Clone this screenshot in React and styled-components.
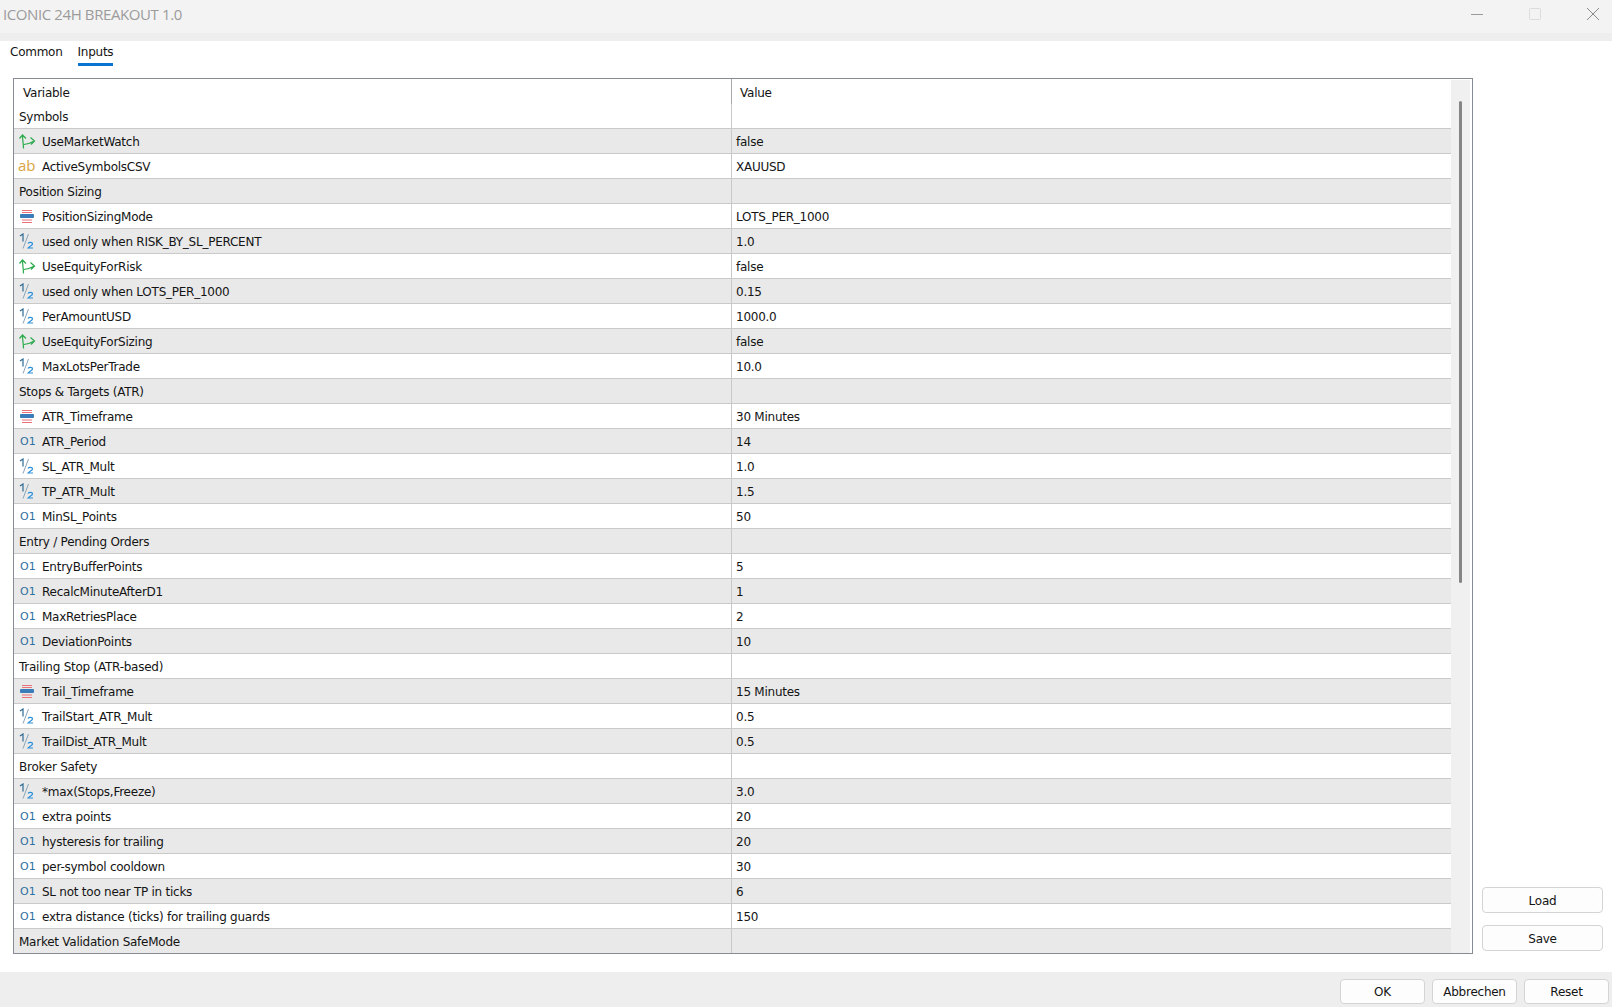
import React from "react";
import styled, { createGlobalStyle } from "styled-components";

const rows = [
  { group: "Symbols" },
  { type: "bool", name: "UseMarketWatch", value: "false" },
  { type: "str", name: "ActiveSymbolsCSV", value: "XAUUSD" },
  { group: "Position Sizing" },
  { type: "enum", name: "PositionSizingMode", value: "LOTS_PER_1000" },
  { type: "dbl", name: "used only when RISK_BY_SL_PERCENT", value: "1.0" },
  { type: "bool", name: "UseEquityForRisk", value: "false" },
  { type: "dbl", name: "used only when LOTS_PER_1000", value: "0.15" },
  { type: "dbl", name: "PerAmountUSD", value: "1000.0" },
  { type: "bool", name: "UseEquityForSizing", value: "false" },
  { type: "dbl", name: "MaxLotsPerTrade", value: "10.0" },
  { group: "Stops & Targets (ATR)" },
  { type: "enum", name: "ATR_Timeframe", value: "30 Minutes" },
  { type: "int", name: "ATR_Period", value: "14" },
  { type: "dbl", name: "SL_ATR_Mult", value: "1.0" },
  { type: "dbl", name: "TP_ATR_Mult", value: "1.5" },
  { type: "int", name: "MinSL_Points", value: "50" },
  { group: "Entry / Pending Orders" },
  { type: "int", name: "EntryBufferPoints", value: "5" },
  { type: "int", name: "RecalcMinuteAfterD1", value: "1" },
  { type: "int", name: "MaxRetriesPlace", value: "2" },
  { type: "int", name: "DeviationPoints", value: "10" },
  { group: "Trailing Stop (ATR-based)" },
  { type: "enum", name: "Trail_Timeframe", value: "15 Minutes" },
  { type: "dbl", name: "TrailStart_ATR_Mult", value: "0.5" },
  { type: "dbl", name: "TrailDist_ATR_Mult", value: "0.5" },
  { group: "Broker Safety" },
  { type: "dbl", name: "*max(Stops,Freeze)", value: "3.0" },
  { type: "int", name: "extra points", value: "20" },
  { type: "int", name: "hysteresis for trailing", value: "20" },
  { type: "int", name: "per-symbol cooldown", value: "30" },
  { type: "int", name: "SL not too near TP in ticks", value: "6" },
  { type: "int", name: "extra distance (ticks) for trailing guards", value: "150" },
  { group: "Market Validation SafeMode" },
];

function TypeIcon({ type }) {
  if (type === "bool") {
    return (
      <IconSvg viewBox="0 0 18 16">
        <path
          d="M1.500 5.500L4.500 2 8 5.500M4.500 2C4.500 7 5.500 11 5.500 15.500M6 11.500C9 11 13 10 16.500 8M12.500 4.500L16.500 8 13 11.500"
          fill="none"
          stroke="#2bab4c"
          strokeWidth="1.2"
        />
      </IconSvg>
    );
  }
  if (type === "enum") {
    return (
      <IconSvg viewBox="0 0 18 16">
        <path d="M4 2.500h10M4 4.500h10M4 12h10M4 14.500h10" stroke="#e8737a" strokeWidth="1" />
        <rect x="2" y="6" width="14" height="4" rx="1" fill="#3a7db8" />
      </IconSvg>
    );
  }
  if (type === "dbl") {
    return (
      <IconSvg viewBox="0 0 18 16">
        <path d="M2 3L5 1v7.500" fill="none" stroke="#2c6a96" strokeWidth="1.2" />
        <path d="M5 15.500L10.500 1" stroke="#8aa4b8" strokeWidth="1" />
        <path d="M10 10.500c1-1.500 4.500-1.500 4.500.5 0 1.500-3 2-4.500 4h5" fill="none" stroke="#2a8fd8" strokeWidth="1.2" />
      </IconSvg>
    );
  }
  if (type === "str") return <StrIcon>ab</StrIcon>;
  return <IntIcon>O1</IntIcon>;
}

export default function App() {
  return (
    <Window>
      <GlobalStyle />
      <TitleBar>
        <Title>ICONIC 24H BREAKOUT 1.0</Title>
        <WindowButtons>
          <svg width="12" height="12" viewBox="0 0 12 12"><path d="M0 6.500h12" stroke="#9a9a9a" strokeWidth="1" /></svg>
          <svg width="12" height="12" viewBox="0 0 12 12"><rect x=".5" y=".5" width="11" height="11" rx="1" fill="none" stroke="#dcdcdc" /></svg>
          <svg width="12" height="12" viewBox="0 0 12 12"><path d="M0 0l12 12M12 0L0 12" stroke="#8a8a8a" strokeWidth="1" /></svg>
        </WindowButtons>
      </TitleBar>
      <SubBand />
      <Tabs>
        <Tab>Common</Tab>
        <Tab $active>Inputs</Tab>
      </Tabs>
      <Body>
        <TableBox>
          <TableArea>
            <HeaderRow>
              <HeaderCell>Variable</HeaderCell>
              <HeaderCell $value>Value</HeaderCell>
            </HeaderRow>
            {rows.map((row, i) => (
              <Row key={i} $shaded={i % 2 === 1}>
                <NameCell>
                  {row.group ? (
                    row.group
                  ) : (
                    <>
                      <IconSlot><TypeIcon type={row.type} /></IconSlot>
                      {row.name}
                    </>
                  )}
                </NameCell>
                <ValueCell>{row.value}</ValueCell>
              </Row>
            ))}
          </TableArea>
          <ScrollTrack>
            <ScrollThumb />
          </ScrollTrack>
        </TableBox>
        <SideButtons>
          <SideButton>Load</SideButton>
          <SideButton>Save</SideButton>
        </SideButtons>
      </Body>
      <Footer>
        <FooterButton>OK</FooterButton>
        <FooterButton>Abbrechen</FooterButton>
        <FooterButton>Reset</FooterButton>
      </Footer>
    </Window>
  );
}

const GlobalStyle = createGlobalStyle`
  html, body {
    margin: 0;
    padding: 0;
    background: #fff;
  }
`;

const Window = styled.div`
  width: 1612px;
  height: 1007px;
  display: flex;
  flex-direction: column;
  overflow: hidden;
  background: #fff;
  color: #141414;
  font-family: "DejaVu Sans", "Liberation Sans", sans-serif;
  font-size: 12px;
  letter-spacing: -0.25px;
`;

const TitleBar = styled.div`
  height: 33px;
  flex: none;
  display: flex;
  align-items: center;
  justify-content: space-between;
  background: #f3f3f3;
  padding-left: 3px;
`;

const Title = styled.div`
  font-family: "Open Sans", sans-serif;
  font-size: 15px;
  letter-spacing: -0.4px;
  color: #9b9b9b;
  margin-top: -5px;
`;

const WindowButtons = styled.div`
  display: flex;
  gap: 46px;
  padding-right: 13px;
  margin-top: -5px;
`;

const SubBand = styled.div`
  height: 8px;
  flex: none;
  background: #eeeeee;
`;

const Tabs = styled.div`
  height: 37px;
  flex: none;
  display: flex;
  gap: 15px;
  padding-left: 10px;
`;

const Tab = styled.div`
  height: 25px;
  line-height: 22px;
  box-sizing: border-box;
  border-bottom: ${(p) => (p.$active ? "3px solid #0a74d2" : "none")};
`;

const Body = styled.div`
  flex: 1;
  display: flex;
  padding-left: 13px;
  min-height: 0;
`;

const TableBox = styled.div`
  width: 1460px;
  height: 876px;
  box-sizing: border-box;
  flex: none;
  display: flex;
  border: 1px solid #868b96;
`;

const TableArea = styled.div`
  flex: 1;
  display: flex;
  flex-direction: column;
  min-width: 0;
  overflow: hidden;
`;

const HeaderRow = styled.div`
  height: 25px;
  flex: none;
  display: flex;
`;

const HeaderCell = styled.div`
  box-sizing: border-box;
  line-height: 23px;
  padding-top: 3px;
  width: ${(p) => (p.$value ? "auto" : "717px")};
  flex: ${(p) => (p.$value ? 1 : "none")};
  padding-left: ${(p) => (p.$value ? "8px" : "9px")};
  border-left: ${(p) => (p.$value ? "1px solid #a8a8a8" : "none")};
`;

const Row = styled.div`
  height: 25px;
  flex: none;
  box-sizing: border-box;
  display: flex;
  background: ${(p) => (p.$shaded ? "#e9e9e9" : "#ffffff")};
  border-bottom: 1px solid #c9c9c9;
`;

const NameCell = styled.div`
  width: 717px;
  flex: none;
  box-sizing: border-box;
  display: flex;
  align-items: center;
  padding: 1px 0 0 5px;
`;

const IconSlot = styled.span`
  width: 23px;
  height: 16px;
  flex: none;
  display: flex;
  align-items: center;
  margin-top: -2px;
`;

const IconSvg = styled.svg`
  width: 18px;
  height: 16px;
  display: block;
  margin-left: -1px;
`;

const StrIcon = styled.span`
  font-family: "Open Sans", sans-serif;
  font-size: 15px;
  line-height: 16px;
  letter-spacing: 0;
  margin: -2px 0 0 -1px;
  color: #d9a441;
`;

const IntIcon = styled.span`
  font-family: "DejaVu Sans", sans-serif;
  font-size: 11px;
  line-height: 16px;
  letter-spacing: 0;
  margin: 2px 0 0 1px;
  color: #2f6f9f;
`;

const ValueCell = styled.div`
  flex: 1;
  box-sizing: border-box;
  display: flex;
  align-items: center;
  padding: 1px 0 0 4px;
  border-left: 1px solid #c9c9c9;
`;

const ScrollTrack = styled.div`
  width: 21px;
  flex: none;
  background: #f0f0f0;
  border-top: 1px solid #fff;
  border-right: 2px solid #fff;
  box-sizing: border-box;
  padding: 21px 0 0 8px;
`;

const ScrollThumb = styled.div`
  width: 3px;
  height: 482px;
  border-radius: 2px;
  background: #858585;
`;

const SideButtons = styled.div`
  width: 121px;
  height: 876px;
  margin-left: 9px;
  display: flex;
  flex-direction: column;
  justify-content: flex-end;
  gap: 12px;
  padding-bottom: 3px;
  box-sizing: border-box;
`;

const SideButton = styled.div`
  height: 26px;
  box-sizing: border-box;
  display: flex;
  align-items: center;
  justify-content: center;
  padding-top: 2px;
  background: #fdfdfd;
  border: 1px solid #d4d4d4;
  border-radius: 4px;
`;

const Footer = styled.div`
  height: 35px;
  flex: none;
  display: flex;
  justify-content: flex-end;
  gap: 7px;
  padding: 7px 3px 3px 0;
  box-sizing: border-box;
  background: #eeeeee;
`;

const FooterButton = styled.div`
  width: 85px;
  box-sizing: border-box;
  display: flex;
  align-items: center;
  justify-content: center;
  background: #fdfdfd;
  border: 1px solid #d4d4d4;
  border-radius: 4px;
`;
